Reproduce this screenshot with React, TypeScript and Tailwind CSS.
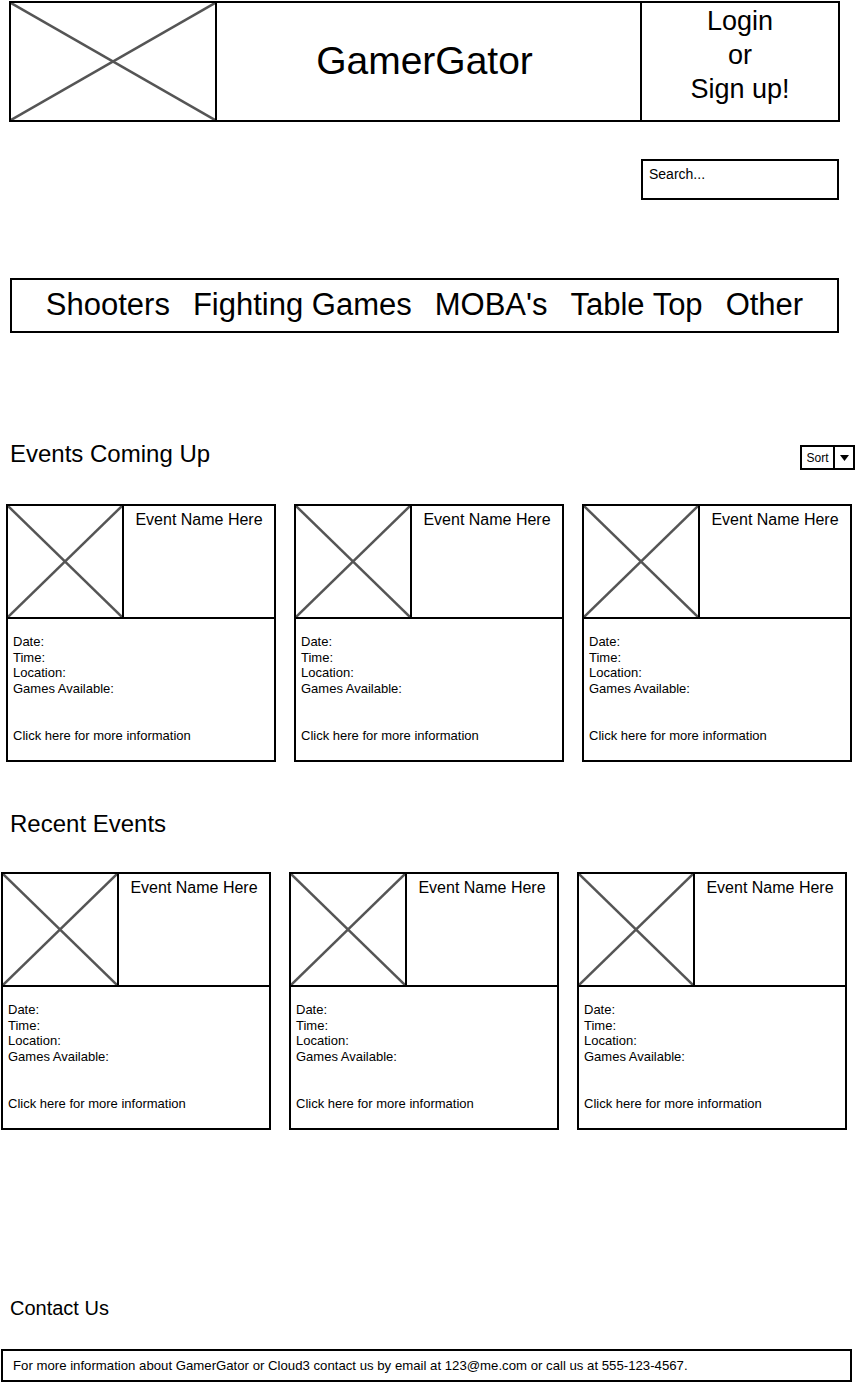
import React from 'react';

const font = "font-['Liberation_Sans',Arial,sans-serif]";

function Placeholder({ className = '' }: { className?: string }) {
  return (
    <div className={`relative ${className}`}>
      <svg className="absolute inset-0 w-full h-full" preserveAspectRatio="none" viewBox="0 0 100 100">
        <line x1="0" y1="0" x2="100" y2="100" stroke="#555" strokeWidth="2.5" vectorEffect="non-scaling-stroke" />
        <line x1="100" y1="0" x2="0" y2="100" stroke="#555" strokeWidth="2.5" vectorEffect="non-scaling-stroke" />
      </svg>
    </div>
  );
}

function EventCard() {
  return (
    <div className="w-[270px] h-[258px] border-2 border-black flex flex-col bg-white">
      <div className="h-[113px] flex border-b-2 border-black shrink-0">
        <Placeholder className="w-[116px] h-full border-r-2 border-black" />
        <div className="flex-1 text-center text-[16px] leading-[20px] pt-[4px]">Event Name Here</div>
      </div>
      <div className="px-[5px] pt-[15px] text-[13px] leading-[15.6px]">
        <div>Date:</div>
        <div>Time:</div>
        <div>Location:</div>
        <div>Games Available:</div>
        <div className="mt-[32px]">Click here for more information</div>
      </div>
    </div>
  );
}

export default function App() {
  const categories = ['Shooters', 'Fighting Games', "MOBA's", 'Table Top', 'Other'];

  return (
    <div className={`w-[855px] h-[1385px] bg-white text-black overflow-hidden ${font}`}>
      {/* Header */}
      <div className="mt-px ml-[9px] w-[831px] h-[121px] flex border-2 border-black">
        <Placeholder className="w-[206px] h-full border-r-2 border-black" />
        <div className="flex-1 flex items-center justify-center text-[39px] pr-[8px] border-r-2 border-black">
          GamerGator
        </div>
        <div className="w-[196px] text-center text-[27px] leading-[34px] pt-[1px]">
          <div>Login</div>
          <div>or</div>
          <div>Sign up!</div>
        </div>
      </div>

      {/* Search */}
      <div className="mt-[37px] ml-[641px] w-[198px] h-[41px] border-2 border-black px-[6px] pt-[4px] text-[14px] leading-[18px]">
        Search...
      </div>

      {/* Categories */}
      <div className="mt-[78px] ml-[10px] w-[829px] h-[55px] border-2 border-black flex items-center justify-center gap-[23px] text-[31px]">
        {categories.map((c) => (
          <span key={c}>{c}</span>
        ))}
      </div>

      {/* Events coming up */}
      <div className="mt-[107px] flex justify-between items-start">
        <h2 className="ml-[10px] text-[24px] leading-[28px]">Events Coming Up</h2>
        <div className="mt-[5px] h-[25px] w-[55px] flex border-2 border-black text-[12px]">
          <div className="w-[33px] flex items-center justify-center border-r-2 border-black">Sort</div>
          <div className="flex-1 flex items-center justify-center">
            <svg width="9" height="6" viewBox="0 0 9 6">
              <path d="M0 0 L9 0 L4.5 6 Z" fill="black" />
            </svg>
          </div>
        </div>
      </div>
      <div className="mt-[34px] ml-[6px] flex gap-[18px]">
        <EventCard />
        <EventCard />
        <EventCard />
      </div>

      {/* Recent events */}
      <h2 className="mt-[48px] ml-[10px] text-[24px] leading-[28px]">Recent Events</h2>
      <div className="mt-[34px] ml-px flex gap-[18px]">
        <EventCard />
        <EventCard />
        <EventCard />
      </div>

      {/* Contact */}
      <h2 className="mt-[166px] ml-[10px] text-[20px] leading-[24px]">Contact Us</h2>
      <div className="mt-[29px] ml-px w-[851px] h-[33px] border-2 border-black flex items-center px-[10px] text-[13.2px]">
        For more information about GamerGator or Cloud3 contact us by email at 123@me.com or call us at 555-123-4567.
      </div>
    </div>
  );
}
